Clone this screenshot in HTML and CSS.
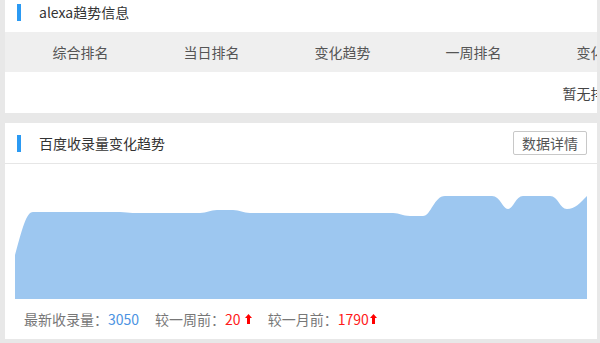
FILE: index.html
```html
<!DOCTYPE html>
<html lang="zh-CN">
<head>
  <meta charset="UTF-8">
  <meta name="viewport" content="width=device-width, initial-scale=1.0">
  <title>alexa趋势信息</title>
  <link rel="stylesheet" href="styles.css">
</head>
<body>

  <!-- Alexa ranking panel -->
  <div class="panel panel-alexa">
    <div class="panel-title">
      <span class="title-bar"></span>
      <span class="title-text">alexa趋势信息</span>
    </div>
    <div class="table-wrap">
      <table class="rank-table">
        <thead>
          <tr>
            <th>综合排名</th>
            <th>当日排名</th>
            <th>变化趋势</th>
            <th>一周排名</th>
            <th>变化趋势</th>
            <th>一月排名</th>
            <th>变化趋势</th>
            <th>三月排名</th>
            <th>变化趋势</th>
          </tr>
        </thead>
        <tbody>
          <tr>
            <td colspan="9">暂无排名数据</td>
          </tr>
        </tbody>
      </table>
    </div>
  </div>

  <!-- Baidu index panel -->
  <div class="panel panel-baidu">
    <div class="panel-title with-border">
      <span class="title-bar"></span>
      <span class="title-text">百度收录量变化趋势</span>
      <button class="detail-btn">数据详情</button>
    </div>
    <div class="chart">
      <svg viewBox="0 0 572 135" width="572" height="135" preserveAspectRatio="none">
        <path class="chart-area" d="M0,91 C7,66 11,48 18,48 L105,48 C115,49 120,49 130,49 L185,49 C192,49 195,46 202,46 L218,46 C225,46 228,49 235,49 L378,49 C385,49 387,52 395,52 L408,52 C416,52 419,32 430,32 L477,32 C485,32 488,45 493,45 C498,45 501,32 508,32 L535,32 C543,32 545,45 552,45 C560,45 565,39 572,32 L572,135 L0,135 Z"/>
      </svg>
    </div>
    <div class="chart-footer">
      <span class="stat">最新收录量：<em class="num-blue">3050</em></span>
      <span class="stat">较一周前：<em class="num-red">20</em><svg class="up" viewBox="0 0 7 10" width="7" height="10"><path d="M3.5,0 L7,4 L5,4 L5,10 L2,10 L2,4 L0,4 Z"/></svg></span>
      <span class="stat">较一月前：<em class="num-red">1790</em><svg class="up" viewBox="0 0 7 10" width="7" height="10"><path d="M3.5,0 L7,4 L5,4 L5,10 L2,10 L2,4 L0,4 Z"/></svg></span>
    </div>
  </div>

</body>
</html>
```

FILE: styles.css
```css
body {
  margin: 0;
  padding: 0 3px 4px 5px;
  background-color: #e8e8e8;
  font-family: "Noto Sans CJK SC", "Microsoft YaHei", sans-serif;
  font-size: 14px;
  color: #333;
  overflow: hidden;
}

.panel {
  background-color: #ffffff;
}

.panel-alexa {
  height: 113px;
  overflow: hidden;
  margin-bottom: 10px;
}

.panel-title {
  display: flex;
  align-items: center;
  height: 32px;
  padding: 0 10px 0 12px;
}

.panel-alexa .panel-title {
  align-items: flex-start;
}

.panel-alexa .title-bar {
  margin-top: 4px;
}

.panel-alexa .title-text {
  line-height: 25px;
}

.panel-title.with-border {
  height: 40px;
  border-bottom: 1px solid #e6e6e6;
}

.title-bar {
  width: 4px;
  height: 17px;
  background-color: #2b9af3;
}

.title-text {
  margin-left: 18px;
  color: #333;
}

.detail-btn {
  margin-left: auto;
  width: 74px;
  height: 24px;
  padding: 0;
  background: #fff;
  border: 1px solid #c8c8c8;
  border-radius: 2px;
  font-family: inherit;
  font-size: 14px;
  color: #555;
  cursor: pointer;
}

/* ranking table is wider than the panel, it gets cut on the right */
.table-wrap {
  overflow: hidden;
}

.rank-table {
  width: 1179px;
  margin-left: 10px;
  table-layout: fixed;
  border-collapse: collapse;
}

.rank-table th {
  width: 131px;
  height: 40px;
  padding: 0;
  font-weight: normal;
  color: #555;
  background-color: #efefef;
  text-align: center;
}

.rank-table thead tr {
  box-shadow: -10px 0 0 #efefef;
}

.rank-table td {
  height: 41px;
  padding: 0;
  text-align: center;
  color: #444;
}

.chart {
  padding: 0 10px;
  height: 135px;
}

.chart svg {
  display: block;
}

.chart-area {
  fill: #9dc7f0;
}

.chart-footer {
  display: flex;
  align-items: center;
  gap: 16px;
  height: 40px;
  padding-left: 19px;
  color: #777;
}

.stat {
  display: flex;
  align-items: center;
}

.stat em {
  font-style: normal;
}

.num-blue {
  color: #4b93e2;
}

.num-red {
  color: #ff1a1a;
}

.up {
  margin-left: 4px;
  fill: #ff0000;
}

.stat:last-child .up {
  margin-left: 1px;
}
```
